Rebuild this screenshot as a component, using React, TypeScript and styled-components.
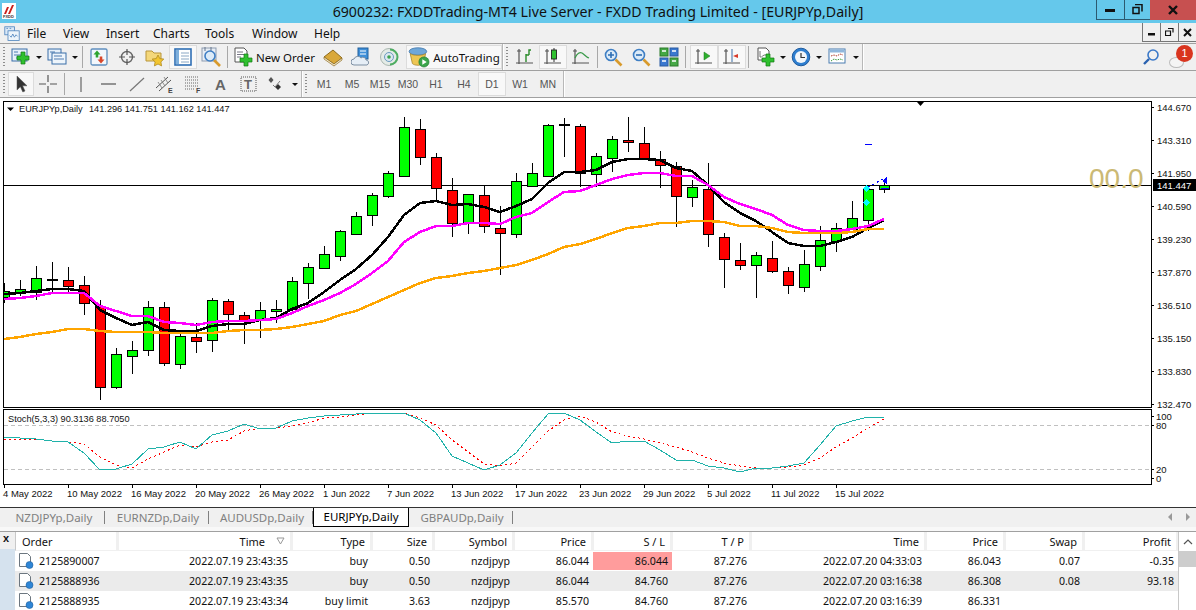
import React from "react";
import styled, { createGlobalStyle } from "styled-components";

const GlobalStyle = createGlobalStyle`
  html, body { margin: 0; padding: 0; background: #fff; }
  * { box-sizing: border-box; }
`;

const UI_FONT = `"Noto Sans", "Liberation Sans", sans-serif`;
const CHART_FONT = `"Liberation Sans", sans-serif`;

/* ---------- chart data, read off the picture: one value per bar, 16px apart ---------- */
const xOf = (i: number) => 4 + 16 * i;

// top, bottom, wickTop, wickBottom, up
type Bar = [number, number, number, number, 0 | 1];
const bars: Bar[] = [
  [291, 297, 283, 303, 1], [289, 293, 280, 296, 1], [278, 292, 266, 300, 1], [279, 279, 262, 292, 1],
  [280, 286, 267, 292, 0], [285, 303, 276, 315, 0], [306, 387, 300, 400, 0], [354, 387, 348, 389, 1],
  [350, 356, 341, 374, 1], [307, 350, 301, 356, 1], [307, 363, 302, 366, 0], [336, 364, 333, 369, 1],
  [337, 341, 323, 353, 0], [300, 340, 298, 352, 1], [301, 314, 299, 330, 0], [315, 320, 312, 344, 0],
  [310, 319, 302, 338, 1], [309, 311, 300, 323, 1], [281, 309, 277, 313, 1], [267, 283, 263, 299, 1],
  [254, 268, 246, 268, 1], [231, 256, 230, 261, 1], [216, 234, 212, 235, 1], [195, 215, 193, 226, 1],
  [173, 196, 171, 198, 1], [127, 176, 117, 176, 1], [129, 157, 119, 165, 0], [157, 188, 153, 200, 0],
  [190, 223, 178, 237, 0], [194, 222, 194, 234, 1], [195, 226, 185, 233, 0], [228, 233, 206, 275, 0],
  [181, 234, 173, 238, 1], [173, 186, 163, 186, 1], [125, 176, 124, 176, 1], [124, 124, 118, 157, 1],
  [126, 173, 124, 187, 0], [156, 174, 153, 187, 1], [139, 158, 136, 172, 1], [140, 142, 117, 152, 0],
  [143, 158, 127, 158, 0], [159, 165, 151, 188, 0], [166, 196, 162, 227, 0], [187, 197, 180, 207, 1],
  [189, 234, 163, 247, 0], [237, 259, 233, 288, 0], [260, 265, 243, 270, 0], [255, 265, 252, 298, 1],
  [258, 271, 241, 273, 0], [271, 285, 267, 294, 0], [264, 287, 250, 292, 1], [240, 266, 226, 271, 1],
  [228, 241, 223, 252, 1], [218, 229, 201, 229, 1], [189, 220, 185, 231, 1], [185, 189, 181, 193, 1],
];

const maBlack = [294, 293, 291, 289, 289, 291, 310, 318, 325, 322, 330, 331, 331, 326, 324, 324, 320, 318, 309, 303, 292, 280, 269, 255, 237, 215, 203, 201, 205, 204, 207, 212, 206, 199, 183, 172, 172, 170, 162, 159, 159, 160, 168, 171, 185, 202, 213, 221, 232, 243, 246, 246, 242, 237, 228, 220];
const maMagenta = [299, 298, 296, 293, 293, 293, 306, 311, 316, 316, 322, 323, 325, 322, 321, 321, 320, 319, 313, 306, 300, 293, 284, 273, 261, 242, 232, 226, 226, 223, 223, 224, 217, 213, 202, 192, 191, 185, 179, 175, 173, 173, 176, 176, 185, 197, 204, 209, 215, 225, 230, 231, 231, 229, 226, 219];
const maOrange = [339, 337, 334, 332, 329, 329, 331, 332, 332, 332, 333, 333, 333, 333, 331, 330, 330, 329, 327, 324, 321, 315, 311, 304, 297, 290, 283, 278, 276, 273, 271, 268, 265, 260, 254, 247, 244, 239, 233, 228, 226, 223, 223, 221, 221, 222, 226, 226, 228, 232, 233, 233, 233, 232, 229, 229];
const stochMain = [437, 438, 439, 441, 442, 453, 470, 469, 464, 449, 447, 442, 449, 435, 431, 424, 429, 428, 421, 418, 416, 415, 414, 413, 413, 413, 420, 433, 456, 463, 470, 465, 453, 433, 414, 413, 420, 432, 443, 441, 441, 450, 460, 460, 466, 468, 472, 468, 468, 466, 463, 445, 426, 421, 417, 418];
const stochSignal = [440, 439, 439, 441, 442, 444, 457, 465, 468, 459, 452, 445, 447, 442, 440, 431, 428, 428, 426, 423, 418, 417, 415, 413, 413, 413, 418, 425, 440, 452, 464, 466, 463, 447, 431, 420, 416, 422, 432, 436, 439, 443, 447, 452, 458, 463, 466, 468, 468, 467, 465, 458, 447, 438, 428, 419];

const toPoints = (ys: number[]) => ys.map((y, i) => `${xOf(i)},${y}`).join(" ");

const priceLabels: [string, number][] = [
  ["144.670", 107], ["143.310", 140], ["141.950", 173], ["140.590", 206], ["139.230", 239],
  ["137.870", 272], ["136.510", 305], ["135.150", 338], ["133.830", 371], ["132.470", 404],
];
const stochLabels: [string, number][] = [["100", 416], ["80", 425], ["20", 469], ["0", 478]];
const dateLabels = [
  "4 May 2022", "10 May 2022", "16 May 2022", "20 May 2022", "26 May 2022", "1 Jun 2022", "7 Jun 2022",
  "13 Jun 2022", "17 Jun 2022", "23 Jun 2022", "29 Jun 2022", "5 Jul 2022", "11 Jul 2022", "15 Jul 2022",
];

/* ---------- table data ---------- */
const COLUMNS = "103px 174px 80px 62px 80px 79px 79px 79px 175px 79px 79px 94px";
const headers = ["Order", "Time", "Type", "Size", "Symbol", "Price", "S / L", "T / P", "Time", "Price", "Swap", "Profit"];
const rows = [
  ["2125890007", "2022.07.19 23:43:35", "buy", "0.50", "nzdjpyp", "86.044", "86.044", "87.276", "2022.07.20 04:33:03", "86.043", "0.07", "-0.35"],
  ["2125888936", "2022.07.19 23:43:35", "buy", "0.50", "nzdjpyp", "86.044", "84.760", "87.276", "2022.07.20 03:16:38", "86.308", "0.08", "93.18"],
  ["2125888935", "2022.07.19 23:43:34", "buy limit", "3.63", "nzdjpyp", "85.570", "84.760", "87.276", "2022.07.20 03:16:39", "86.331", "", ""],
];

/* ---------- icons ---------- */
const Svg: React.FC<{ children: React.ReactNode; size?: number }> = ({ children, size = 20 }) => (
  <svg width={size} height={size} viewBox="0 0 20 20">{children}</svg>
);

const Plus = ({ x = 11, y = 11 }: { x?: number; y?: number }) => (
  <path d={`M${x - 2} ${y - 6}h4v4h4v4h-4v4h-4v-4h-4v-4h4z`} fill="#2fc02f" stroke="#137a13" strokeWidth="0.7" />
);
const Lens = ({ cx = 8, cy = 8, r = 5.5 }: { cx?: number; cy?: number; r?: number }) => (
  <>
    <line x1={cx + r - 1} y1={cy + r - 1} x2={cx + r + 5} y2={cy + r + 5} stroke="#d89a2c" strokeWidth="2.6" />
    <circle cx={cx} cy={cy} r={r} fill="#dcebf8" stroke="#3f7fc4" strokeWidth="1.6" />
  </>
);
const Axes = () => <path d="M4 2v15M1 16h17M2 4h4" fill="none" stroke="#555" strokeWidth="1.2" />;

const IconNewChart = () => (
  <Svg>
    <rect x="1" y="2" width="15" height="12" fill="#e6f0fa" stroke="#3a6ea8" />
    <path d="M3 5h4M3 8h7M5 11h7" stroke="#3a6ea8" strokeWidth="0.9" />
    <Plus x={12} y={11} />
  </Svg>
);
const IconProfiles = () => (
  <Svg>
    <rect x="1" y="2" width="13" height="11" fill="#e6f0fa" stroke="#3a6ea8" />
    <rect x="5" y="6" width="14" height="11" fill="#eef5fb" stroke="#3a6ea8" />
    <path d="M7 9h8M7 12h10M3 5h5" stroke="#3a6ea8" strokeWidth="0.9" />
  </Svg>
);
const IconMarketWatch = () => (
  <Svg>
    <rect x="2" y="2" width="16" height="16" rx="1.5" fill="#f2f7fc" stroke="#5f8fbe" strokeWidth="1.3" />
    <path d="M8 3.5l3.5 4H9.3v3H6.7v-3H4.5z" fill="#2fa52f" />
    <path d="M12 16.5l-3.5-4h2.2v-3h2.6v3h2.2z" fill="#d8472b" />
  </Svg>
);
const IconCrosshair = () => (
  <Svg>
    <circle cx="10" cy="10" r="5.5" fill="none" stroke="#666" strokeWidth="1.4" />
    <path d="M10 2v6M10 12v6M2 10h6M12 10h6" stroke="#555" strokeWidth="1.2" />
  </Svg>
);
const IconFolderStar = () => (
  <Svg>
    <path d="M1 4h6l2 2h7v8H1z" fill="#f4d77a" stroke="#b8953a" />
    <path d="M13 8l1.8 3.6 4 .5-2.9 2.8.7 4-3.6-1.9-3.6 1.9.7-4-2.9-2.8 4-.5z" fill="#f2c531" stroke="#b08a20" strokeWidth="0.8" />
  </Svg>
);
const IconNavigator = () => (
  <Svg>
    <rect x="2" y="2" width="16" height="16" fill="#fff" stroke="#2f6fb4" strokeWidth="1.6" />
    <rect x="3" y="3" width="3" height="14" fill="#7fb0dc" />
    <path d="M8 6h8M8 9h8M8 12h8M8 15h8" stroke="#8aa7c4" />
  </Svg>
);
const IconTester = () => (
  <Svg>
    <rect x="1" y="1" width="14" height="13" fill="#e8eef5" stroke="#8d9bb0" />
    <path d="M4 0v4M10 0v4" stroke="#66768c" />
    <Lens cx={9} cy={9} r={5} />
  </Svg>
);
const IconNewOrder = () => (
  <Svg>
    <path d="M2 1h9l3 3v11H2z" fill="#fff" stroke="#555" />
    <path d="M4 5h6M4 7.5h8M4 10h4" stroke="#667" strokeWidth="0.9" />
    <Plus x={13} y={13} />
  </Svg>
);
const IconBook = () => (
  <Svg>
    <path d="M1 10l9-7 9 8-8 6z" fill="#d9a83a" stroke="#8d6a1c" />
    <path d="M1 10v2l10 7 8-6v-2l-8 6z" fill="#f4ead0" stroke="#8d6a1c" strokeWidth="0.7" />
  </Svg>
);
const IconCloud = () => (
  <Svg>
    <rect x="7" y="1" width="10" height="11" fill="#3f8fd8" stroke="#22609c" />
    <path d="M9 4h6M9 7h6" stroke="#fff" />
    <path d="M3 18a3 3 0 0 1 0-6 4 4 0 0 1 7-1 3 3 0 0 1 5 2 2.6 2.6 0 0 1 1 5z" fill="#e6eef6" stroke="#7d8fa3" />
  </Svg>
);
const IconSignals = () => (
  <Svg>
    <circle cx="10" cy="10" r="8.5" fill="#e4ebe6" stroke="#a9b7b0" />
    <path d="M11 2.5a7.5 7.5 0 0 1 0 15" fill="none" stroke="#4eae62" strokeWidth="2" />
    <circle cx="10" cy="10" r="4.5" fill="#dce8f0" stroke="#6a9ac0" />
    <circle cx="10" cy="10" r="1.8" fill="#3ca34f" />
  </Svg>
);
const IconAutoTrading = () => (
  <Svg size={22}>
    <ellipse cx="9" cy="5" rx="8" ry="3.4" fill="#6fa7d8" stroke="#3f74a8" strokeWidth="0.7" />
    <path d="M2 7l2 9c2 2 8 2 10 0l2-9c-3 2-11 2-14 0z" fill="#eec653" stroke="#a58428" strokeWidth="0.7" />
    <circle cx="14.5" cy="14.5" r="4.6" fill="#3aa54a" stroke="#1e7a30" strokeWidth="0.6" />
    <path d="M13 12l4 2.5-4 2.5z" fill="#fff" />
  </Svg>
);
const IconBars = () => (
  <Svg><Axes /><path d="M11 15V8h3M11 8v-1M14 8V3h2" fill="none" stroke="#2a8a2a" strokeWidth="1.4" /></Svg>
);
const IconCandles = () => (
  <Svg><Axes /><path d="M11 1v14" stroke="#333" /><rect x="8.5" y="3" width="5" height="9" fill="#2fc02f" stroke="#222" strokeWidth="0.9" /></Svg>
);
const IconLineChart = () => (
  <Svg><Axes /><path d="M4 11c2-5 5-6 7-5s4 4 7 5" fill="none" stroke="#3a9a4a" strokeWidth="1.3" /></Svg>
);
const IconZoomIn = () => (
  <Svg><Lens /><path d="M5 8h6M8 5v6" stroke="#2e6fb4" strokeWidth="1.6" /></Svg>
);
const IconZoomOut = () => (
  <Svg><Lens /><path d="M5 8h6" stroke="#2e6fb4" strokeWidth="1.6" /></Svg>
);
const IconTile = () => (
  <Svg>
    <rect x="1" y="1" width="8" height="8" fill="#45a845" stroke="#2a7a2a" />
    <rect x="11" y="1" width="8" height="8" fill="#3a78d0" stroke="#2a5aa0" />
    <rect x="1" y="11" width="8" height="8" fill="#3a78d0" stroke="#2a5aa0" />
    <rect x="11" y="11" width="8" height="8" fill="#45a845" stroke="#2a7a2a" />
    <path d="M3 4h4M13 4h4M3 14h4M13 14h4" stroke="#fff" strokeWidth="1.5" />
  </Svg>
);
const IconAutoScroll = () => (
  <Svg><Axes /><path d="M10 5l6 4-6 4z" fill="#2fb02f" stroke="#1a7a1a" strokeWidth="0.5" /></Svg>
);
const IconChartShift = () => (
  <Svg><Axes /><path d="M10 2v13" stroke="#3a6ea8" /><path d="M11 9l5-2v4z" fill="#d83a2a" /></Svg>
);
const IconIndicators = () => (
  <Svg>
    <path d="M3 1h8l3 3v9H3z" fill="#fff" stroke="#555" />
    <path d="M5 4v6c2 1 3-3 6-2" fill="none" stroke="#777" />
    <Plus x={13} y={13} />
  </Svg>
);
const IconClock = () => (
  <Svg>
    <circle cx="10" cy="10" r="8.8" fill="#2f7fd0" stroke="#1d5a9e" />
    <circle cx="10" cy="10" r="6" fill="#f2f6fa" />
    <path d="M10 6v4.5h4" fill="none" stroke="#333" strokeWidth="1.2" />
  </Svg>
);
const IconTemplates = () => (
  <Svg>
    <rect x="1" y="2" width="16" height="14" fill="#fff" stroke="#4a7db0" />
    <rect x="1.5" y="2.5" width="15" height="3" fill="#8fb7dc" />
    <path d="M3 9l3-1 3 1 3-2 3 1" fill="none" stroke="#b03a2a" strokeDasharray="1.5 1" />
    <path d="M3 14l3-2 3 1 3-1 3 1" fill="none" stroke="#3a9a3a" strokeDasharray="1.5 1" />
  </Svg>
);
const IconCursor = () => (
  <Svg><path d="M6 2v14l3.4-3.2 2.4 5.2 2.2-1-2.4-5.2H16z" fill="#333" stroke="#555" strokeWidth="0.5" /></Svg>
);
const IconCross = () => (
  <Svg><path d="M10 1v7M10 12v7M1 10h7M12 10h7" stroke="#555" strokeWidth="1.2" /></Svg>
);
const IconVLine = () => <Svg><path d="M10 3v15" stroke="#666" strokeWidth="1.2" /></Svg>;
const IconHLine = () => <Svg><path d="M2 10h15" stroke="#555" strokeWidth="1.2" /></Svg>;
const IconTrend = () => <Svg><path d="M3 17L17 4" stroke="#777" strokeWidth="1.2" /></Svg>;
const SmallMark = styled.text`
  font: bold 7px ${CHART_FONT};
  fill: #444;
`;
const IconChannel = () => (
  <Svg>
    <path d="M1 14L13 3M4 17L16 6" stroke="#555" />
    <path d="M3 8l4 6M6 6l4 6M9 3l4 6" stroke="#777" strokeWidth="0.8" />
    <SmallMark x="13" y="19">E</SmallMark>
  </Svg>
);
const IconFibo = () => (
  <Svg>
    <path d="M2 3h13M2 6h13M2 9h13M2 12h13M2 15h10" stroke="#666" strokeDasharray="1 1" />
    <SmallMark x="13" y="19">F</SmallMark>
  </Svg>
);
const IconTextA = () => <Svg><text x="4" y="16" fontFamily={CHART_FONT} fontSize="15" fontWeight="700" fill="#666">A</text></Svg>;
const IconLabelT = () => (
  <Svg>
    <rect x="2" y="3" width="15" height="14" fill="none" stroke="#555" strokeDasharray="1 1" />
    <text x="5" y="15" fontFamily={CHART_FONT} fontSize="13" fontWeight="700" fill="#666">T</text>
  </Svg>
);
const IconMore = () => (
  <Svg>
    <path d="M4 3l2.5 3L4 9 1.5 6z" fill="#555" />
    <path d="M11 10l3 3-3 3-3-3z" fill="#333" />
    <path d="M6 11l2 2 5-6" fill="none" stroke="#777" />
  </Svg>
);
const IconMenuChart = () => (
  <Svg size={16}>
    <rect x="1" y="1" width="12" height="10" fill="#dbe9f7" stroke="#4b82bd" />
    <rect x="5" y="6" width="14" height="12" fill="#eef5fb" stroke="#4b82bd" />
    <path d="M7 12l2 2 2-4 2 4 2-3 2 2" fill="none" stroke="#4b82bd" />
    <path d="M3 3h2M7 3h2" stroke="#4b82bd" />
  </Svg>
);
const AppLogo = () => (
  <svg width="14" height="16" viewBox="0 0 14 16">
    <rect width="14" height="16" fill="#fff" />
    <path d="M2 11l3-7h2l-3 7zM6 11l4-9h2l-4 9z" fill="#c8201c" />
    <text x="1" y="15" fontFamily={CHART_FONT} fontSize="4" fontWeight="700" fill="#333">FXDD</text>
  </svg>
);
const IconSearch = () => (
  <svg width="18" height="18" viewBox="0 0 18 18">
    <circle cx="11" cy="7" r="5" fill="none" stroke="#3a78c8" strokeWidth="1.6" />
    <path d="M7 11l-5 5" stroke="#2a62b0" strokeWidth="2.4" />
  </svg>
);
const IconSort = () => (
  <svg width="9" height="8" viewBox="0 0 9 8"><path d="M1 1h7L4.5 7z" fill="none" stroke="#999" /></svg>
);
const IconTicket = () => (
  <svg width="16" height="17" viewBox="0 0 16 17">
    <path d="M1.5 1.5h8l3 3v10h-11z" fill="#fff" stroke="#6d7780" />
    <circle cx="11.5" cy="13" r="3.5" fill="#2f86d6" stroke="#1f5f9e" strokeWidth="0.6" />
  </svg>
);

/* ---------- window chrome ---------- */
const Page = styled.div`
  width: 1196px;
  height: 610px;
  overflow: hidden;
  display: flex;
  flex-direction: column;
  font-family: ${UI_FONT};
  background: #f0f0f0;
`;

const TitleBar = styled.header`
  height: 23px;
  flex: none;
  display: flex;
  align-items: flex-start;
  background: #65c8eb;
`;
const LogoBox = styled.div`
  width: 16px;
  height: 23px;
  margin-left: 2px;
  padding-top: 2px;
  flex: none;
`;
const TitleText = styled.div`
  flex: 1;
  padding-left: 82px;
  height: 23px;
  line-height: 23px;
  text-align: center;
  font-size: 14.2px;
  color: #111;
  white-space: nowrap;
`;
const Caption = styled.div`
  display: flex;
  height: 20px;
  flex: none;
`;
const CaptionBtn = styled.div<{ $w: number; $close?: boolean }>`
  width: ${(p) => p.$w}px;
  display: flex;
  align-items: center;
  justify-content: center;
  background: ${(p) => (p.$close ? "#c75050" : "transparent")};
  border-bottom: 1px solid ${(p) => (p.$close ? "#c75050" : "#2c5a70")};
  border-left: 1px solid ${(p) => (p.$close ? "#c75050" : "#2c5a70")};
`;

const MenuBar = styled.nav`
  height: 21px;
  flex: none;
  display: flex;
  align-items: flex-start;
  border-bottom: 1px solid #a0a0a0;
  background: #f0f0f0;
`;
const MenuIcon = styled.div`
  width: 27px;
  padding: 2px 0 0 4px;
  flex: none;
`;
const MenuItem = styled.span<{ $w: number }>`
  width: ${(p) => p.$w}px;
  flex: none;
  height: 20px;
  line-height: 21px;
  font-size: 12px;
  color: #111;
`;
const InnerCaption = styled.div`
  margin-left: auto;
  display: flex;
  height: 19px;
`;
const InnerBtn = styled.div`
  width: 18px;
  display: flex;
  align-items: center;
  justify-content: center;
  border: 1px solid #777;
  border-top: 0;
  border-right: 0;
  background: #f0f0f0;
`;

const ToolRow = styled.div`
  height: 27px;
  flex: none;
  display: flex;
  align-items: center;
  border-bottom: 1px solid #a0a0a0;
  background: #f0f0f0;
`;
const Grip = styled.span`
  width: 4px;
  height: 20px;
  margin: 0 2px;
  flex: none;
  background-image: repeating-linear-gradient(to bottom, #8d8d8d 0 1px, transparent 1px 3px);
  background-size: 2px 100%;
  background-repeat: no-repeat;
  background-position: 1px 0;
`;
const Sep = styled.span`
  width: 4px;
  height: 22px;
  flex: none;
  display: flex;
  justify-content: center;
  &::before {
    content: "";
    width: 1px;
    background: #a8a8a8;
  }
`;
const Band = styled.span<{ $ml?: number }>`
  width: 1px;
  height: 26px;
  margin-left: ${(p) => p.$ml ?? 0}px;
  flex: none;
  background: #b8b8b8;
  box-shadow: 1px 0 0 #fff;
`;
const Tool = styled.div<{ $w?: number; $pressed?: boolean; $ml?: number }>`
  width: ${(p) => p.$w ?? 28}px;
  height: 24px;
  margin-left: ${(p) => p.$ml ?? 0}px;
  flex: none;
  display: flex;
  align-items: center;
  justify-content: center;
  gap: 3px;
  font-size: 11.5px;
  color: #111;
  background: ${(p) => (p.$pressed ? "#f8f8f8" : "transparent")};
  border: 1px solid ${(p) => (p.$pressed ? "#dcdcdc" : "transparent")};
`;
const Period = styled(Tool)`
  font-family: ${CHART_FONT};
  font-size: 10.5px;
  color: #555;
`;
const Caret = styled.span`
  width: 0;
  height: 0;
  margin-left: 2px;
  border-left: 3px solid transparent;
  border-right: 3px solid transparent;
  border-top: 3px solid #111;
`;
const RightTools = styled.div`
  margin-left: auto;
  display: flex;
  align-items: center;
  gap: 9px;
  padding-right: 3px;
`;
const ChatIcon = styled.div`
  position: relative;
  width: 24px;
  height: 24px;
  &::before {
    content: "";
    position: absolute;
    left: 0;
    top: 12px;
    width: 13px;
    height: 9px;
    border-radius: 50%;
    background: #f4f4f4;
    border: 1px solid #bbb;
  }
`;
const Badge = styled.span`
  position: absolute;
  right: 0;
  top: 0;
  width: 17px;
  height: 17px;
  border-radius: 50%;
  background: #d9351f;
  color: #fff;
  font: 11px/17px ${CHART_FONT};
  text-align: center;
`;

/* ---------- chart ---------- */
const ChartArea = styled.main`
  height: 409px;
  flex: none;
  background: #fff;
  display: flex;
  flex-direction: column;
`;
const ChartSvg = styled.svg`
  display: block;
  flex: none;
`;
const AxisText = styled.text<{ $invert?: boolean }>`
  font-family: ${CHART_FONT};
  font-size: 9.5px;
  fill: ${(p) => (p.$invert ? "#fff" : "#111")};
  dominant-baseline: central;
`;
const LegendText = styled(AxisText)`
  font-size: 9.2px;
`;
const BigValue = styled.text`
  font-family: ${CHART_FONT};
  font-size: 28px;
  fill: #cbb974;
  dominant-baseline: central;
`;

const MainPane = () => (
  <ChartSvg width="1196" height="310" viewBox="0 98 1196 310">
    <defs>
      <clipPath id="plot"><rect x="4" y="102" width="1147" height="305" /></clipPath>
    </defs>
    <g clipPath="url(#plot)" shapeRendering="crispEdges">
      <line x1="3" y1="185.5" x2="1151" y2="185.5" stroke="#000" />
      {bars.map(([top, bottom, wickTop, wickBottom, up], i) => (
        <g key={i}>
          <line x1={xOf(i) + 0.5} y1={wickTop} x2={xOf(i) + 0.5} y2={wickBottom} stroke="#000" />
          <rect x={xOf(i) - 4.5} y={top + 0.5} width="10" height={Math.max(bottom - top, 1)} fill={up ? "#00ff00" : "#ff0000"} stroke="#000" />
        </g>
      ))}
      <polyline points={toPoints(maBlack)} fill="none" stroke="#000" strokeWidth="2.5" />
      <polyline points={toPoints(maOrange)} fill="none" stroke="#ffa500" strokeWidth="2.5" />
      <polyline points={toPoints(maMagenta)} fill="none" stroke="#ff00ff" strokeWidth="2.5" />
      <line x1="865" y1="144.5" x2="872" y2="144.5" stroke="#0000ff" />
      <line x1="881" y1="188.5" x2="889" y2="188.5" stroke="#0000ff" />
      <line x1="868" y1="187" x2="885" y2="178" stroke="#0000ff" strokeDasharray="2 3" />
      <path d="M887 176v8l-5-3z" fill="#0000ff" />
      <path d="M866 185l3.5 3.5-3.5 3.5-3.5-3.5zM866 199l3.5 3.5-3.5 3.5-3.5-3.5z" fill="#00ffff" />
    </g>
    <path d="M917 102h7l-3.5 4z" fill="#000" />
    <path d="M7 107.5h7l-3.5 3.5z" fill="#000" />
    <LegendText x="19" y="109">EURJPYp,Daily</LegendText>
    <LegendText x="89" y="109">141.296 141.751 141.162 141.447</LegendText>
    <BigValue x="1089" y="178">00.0</BigValue>
    <rect x="3.5" y="101.5" width="1148" height="306" fill="none" stroke="#000" shapeRendering="crispEdges" />
    {priceLabels.map(([label, y]) => (
      <g key={label}>
        <line x1="1151" y1={y + 0.5} x2="1154" y2={y + 0.5} stroke="#000" shapeRendering="crispEdges" />
        <AxisText x="1157" y={y}>{label}</AxisText>
      </g>
    ))}
    <rect x="1153" y="179" width="43" height="12" fill="#000" />
    <AxisText x="1157" y="185" $invert>141.447</AxisText>
  </ChartSvg>
);

const StochPane = () => (
  <ChartSvg width="1196" height="99" viewBox="0 408 1196 99">
    <g shapeRendering="crispEdges">
      <line x1="4" y1="425.5" x2="1151" y2="425.5" stroke="#c0c0c0" strokeDasharray="4 3" />
      <line x1="4" y1="469.5" x2="1151" y2="469.5" stroke="#c0c0c0" strokeDasharray="4 3" />
      <polyline points={toPoints(stochSignal)} fill="none" stroke="#ff0000" strokeDasharray="2 3" />
      <polyline points={toPoints(stochMain)} fill="none" stroke="#20b2aa" />
      <rect x="3.5" y="409.5" width="1148" height="75" fill="none" stroke="#000" />
      {dateLabels.map((d, i) => (
        <line key={d} x1={xOf(i * 4) + 0.5} y1="484" x2={xOf(i * 4) + 0.5} y2="488" stroke="#000" />
      ))}
      {stochLabels.map(([l, y]) => (
        <line key={l} x1="1151" y1={y + 0.5} x2="1154" y2={y + 0.5} stroke="#000" />
      ))}
    </g>
    <LegendText x="8" y="419">Stoch(5,3,3) 90.3136 88.7050</LegendText>
    {stochLabels.map(([l, y]) => (
      <AxisText key={l} x="1156" y={y}>{l}</AxisText>
    ))}
    {dateLabels.map((d, i) => (
      <AxisText key={d} x={xOf(i * 4) - 1} y="493.5">{d}</AxisText>
    ))}
  </ChartSvg>
);

/* ---------- tabs ---------- */
const TabBar = styled.div`
  height: 20px;
  flex: none;
  display: flex;
  align-items: flex-start;
  padding-left: 1px;
  background: #f0f0f0;
  border-top: 1px solid #333;
`;
const Tab = styled.div<{ $active?: boolean; $w: number }>`
  width: ${(p) => p.$w}px;
  height: ${(p) => (p.$active ? 19 : 13)}px;
  margin-top: ${(p) => (p.$active ? 0 : 3)}px;
  padding-left: ${(p) => (p.$active ? 0 : 3)}px;
  line-height: ${(p) => (p.$active ? 18 : 13)}px;
  flex: none;
  text-align: center;
  font-size: 11.5px;
  color: ${(p) => (p.$active ? "#000" : "#808080")};
  background: ${(p) => (p.$active ? "#fff" : "transparent")};
  border-right: 1px solid ${(p) => (p.$active ? "#000" : "#808080")};
  border-left: ${(p) => (p.$active ? "1px solid #000" : "0")};
  border-bottom: ${(p) => (p.$active ? "1px solid #000" : "0")};
`;
const TabArrows = styled.div`
  margin-left: auto;
  display: flex;
  align-items: center;
  gap: 14px;
  height: 18px;
  padding-right: 6px;
`;
const TabArrow = styled.span<{ $right?: boolean }>`
  width: 0;
  height: 0;
  border-top: 4px solid transparent;
  border-bottom: 4px solid transparent;
  border-left: ${(p) => (p.$right ? "4px solid #999" : "0")};
  border-right: ${(p) => (p.$right ? "0" : "4px solid #999")};
`;
const Gutter = styled.div`
  height: 4px;
  flex: none;
  background: #f8f8f8;
`;

/* ---------- terminal ---------- */
const Terminal = styled.section`
  flex: 1;
  min-height: 0;
  display: flex;
  border-top: 1px solid #a0a0a0;
  background: #fff;
`;
const SideStrip = styled.aside`
  width: 15px;
  flex: none;
  background: linear-gradient(#f0f0f0 0 17px, #d5e2ee 17px);
  font: 700 11px/9px ${CHART_FONT};
  text-align: center;
  padding: 2px 3px 0 0;
  color: #111;
`;
const TableBox = styled.div`
  width: 1163px;
  flex: none;
`;
const HeadRow = styled.div`
  display: grid;
  grid-template-columns: ${COLUMNS};
  height: 19px;
  border-left: 1px solid #c8c8c8;
  border-bottom: 1px solid #f0f0f0;
`;
const HeadCell = styled.div<{ $left?: boolean }>`
  display: flex;
  align-items: center;
  justify-content: ${(p) => (p.$left ? "flex-start" : "flex-end")};
  gap: 11px;
  padding: ${(p) => (p.$left ? "0 0 0 6px" : "0 5px 0 0")};
  font-size: 11px;
  color: #111;
  background: #fff;
  border-right: 3px solid #f0f0f0;
`;
const DataRow = styled.div<{ $alt?: boolean }>`
  display: grid;
  grid-template-columns: ${COLUMNS};
  height: 20px;
  background: ${(p) => (p.$alt ? "#ebebeb" : "#fff")};
`;
const DataCell = styled.div<{ $alert?: boolean; $first?: boolean }>`
  display: flex;
  align-items: center;
  justify-content: ${(p) => (p.$first ? "flex-start" : "flex-end")};
  gap: 5px;
  padding: ${(p) => (p.$first ? "0 0 1px 3px" : "0 4px 1px 0")};
  font-size: 10.6px;
  color: #111;
  white-space: nowrap;
  height: ${(p) => (p.$alert ? "18px" : "auto")};
  margin-top: ${(p) => (p.$alert ? "1px" : "0")};
  background: ${(p) => (p.$alert ? "#ff9c9c" : "transparent")};
`;
const Scrollbar = styled.div`
  width: 18px;
  flex: none;
  display: flex;
  flex-direction: column;
  border-left: 1px solid #c8c8c8;
`;
const ScrollUp = styled.div`
  height: 19px;
  display: flex;
  align-items: center;
  justify-content: center;
`;
const ScrollThumb = styled.div`
  height: 16px;
  background: #cdcdcd;
`;

const menuItems: [string, number][] = [
  ["File", 36], ["View", 43], ["Insert", 47], ["Charts", 52], ["Tools", 47], ["Window", 62], ["Help", 40],
];
const periods = ["M1", "M5", "M15", "M30", "H1", "H4", "D1", "W1", "MN"];
const tabs: [string, number, boolean?][] = [
  ["NZDJPYp,Daily", 104], ["EURNZDp,Daily", 104], ["AUDUSDp,Daily", 104], ["EURJPYp,Daily", 96, true], ["GBPAUDp,Daily", 104],
];

export default function App() {
  return (
    <Page>
      <GlobalStyle />
      <TitleBar>
        <LogoBox><AppLogo /></LogoBox>
        <TitleText>6900232: FXDDTrading-MT4 Live Server - FXDD Trading Limited - [EURJPYp,Daily]</TitleText>
        <Caption>
          <CaptionBtn $w={28}><svg width="11" height="4"><rect y="1" width="10" height="3" fill="#111" /></svg></CaptionBtn>
          <CaptionBtn $w={26}><svg width="11" height="11"><path d="M3 .5h7v7M1 3.5h6v6H1z" fill="none" stroke="#111" strokeWidth="1.5" /></svg></CaptionBtn>
          <CaptionBtn $w={46} $close><svg width="11" height="10"><path d="M1 1l8 8M9 1L1 9" stroke="#111" strokeWidth="2.4" /></svg></CaptionBtn>
        </Caption>
      </TitleBar>

      <MenuBar>
        <MenuIcon><IconMenuChart /></MenuIcon>
        {menuItems.map(([label, w]) => <MenuItem key={label} $w={w}>{label}</MenuItem>)}
        <InnerCaption>
          <InnerBtn><svg width="8" height="8"><rect y="5" width="7" height="2.5" fill="#111" /></svg></InnerBtn>
          <InnerBtn><svg width="9" height="9"><path d="M3 .5h5v4M.5 3h5v4.5H.5z" fill="none" stroke="#111" strokeWidth="1.2" /></svg></InnerBtn>
          <InnerBtn><svg width="9" height="9"><path d="M1 1l7 7M8 1L1 8" stroke="#111" strokeWidth="2" /></svg></InnerBtn>
        </InnerCaption>
      </MenuBar>

      <ToolRow>
        <Grip />
        <Tool $w={36}><IconNewChart /><Caret /></Tool>
        <Tool $w={36}><IconProfiles /><Caret /></Tool>
        <Sep />
        <Tool $ml={1}><IconMarketWatch /></Tool>
        <Tool><IconCrosshair /></Tool>
        <Tool><IconFolderStar /></Tool>
        <Tool $pressed><IconNavigator /></Tool>
        <Tool><IconTester /></Tool>
        <Sep />
        <Tool $w={90}><IconNewOrder />New Order</Tool>
        <Tool><IconBook /></Tool>
        <Tool><IconCloud /></Tool>
        <Tool><IconSignals /></Tool>
        <Tool $w={96} $pressed $ml={3}><IconAutoTrading />AutoTrading</Tool>
        <Band />
        <Grip />
        <Tool><IconBars /></Tool>
        <Tool $pressed><IconCandles /></Tool>
        <Tool><IconLineChart /></Tool>
        <Sep />
        <Tool><IconZoomIn /></Tool>
        <Tool><IconZoomOut /></Tool>
        <Tool><IconTile /></Tool>
        <Sep />
        <Tool $pressed $ml={3}><IconAutoScroll /></Tool>
        <Tool $pressed><IconChartShift /></Tool>
        <Sep />
        <Tool $w={35} $ml={3}><IconIndicators /><Caret /></Tool>
        <Tool $w={36}><IconClock /><Caret /></Tool>
        <Tool $w={38}><IconTemplates /><Caret /></Tool>
        <Band />
        <RightTools>
          <IconSearch />
          <ChatIcon><Badge>1</Badge></ChatIcon>
        </RightTools>
      </ToolRow>

      <ToolRow>
        <Grip />
        <Tool $w={26} $pressed><IconCursor /></Tool>
        <Tool><IconCross /></Tool>
        <Sep />
        <Tool $ml={1}><IconVLine /></Tool>
        <Tool><IconHLine /></Tool>
        <Tool><IconTrend /></Tool>
        <Tool><IconChannel /></Tool>
        <Tool><IconFibo /></Tool>
        <Tool><IconTextA /></Tool>
        <Tool><IconLabelT /></Tool>
        <Tool $w={38}><IconMore /><Caret /></Tool>
        <Band />
        <Grip />
        {periods.map((p) => <Period key={p} $pressed={p === "D1"}>{p}</Period>)}
        <Band $ml={1} />
      </ToolRow>

      <ChartArea>
        <MainPane />
        <StochPane />
      </ChartArea>

      <TabBar>
        {tabs.map(([label, w, active]) => <Tab key={label} $w={w} $active={active}>{label}</Tab>)}
        <TabArrows><TabArrow /><TabArrow $right /></TabArrows>
      </TabBar>
      <Gutter />

      <Terminal>
        <SideStrip>x</SideStrip>
        <TableBox>
          <HeadRow>
            {headers.map((h, i) => (
              <HeadCell key={i} $left={i === 0}>
                {h}
                {i === 1 && <IconSort />}
              </HeadCell>
            ))}
          </HeadRow>
          {rows.map((r, ri) => (
            <DataRow key={r[0]} $alt={ri === 1}>
              {r.map((v, ci) => (
                <DataCell key={ci} $first={ci === 0} $alert={ri === 0 && ci === 6}>
                  {ci === 0 && <IconTicket />}
                  {v}
                </DataCell>
              ))}
            </DataRow>
          ))}
        </TableBox>
        <Scrollbar>
          <ScrollUp>
            <svg width="10" height="6"><path d="M1 5l4-4 4 4" fill="none" stroke="#555" strokeWidth="1.2" /></svg>
          </ScrollUp>
          <ScrollThumb />
        </Scrollbar>
      </Terminal>
    </Page>
  );
}
